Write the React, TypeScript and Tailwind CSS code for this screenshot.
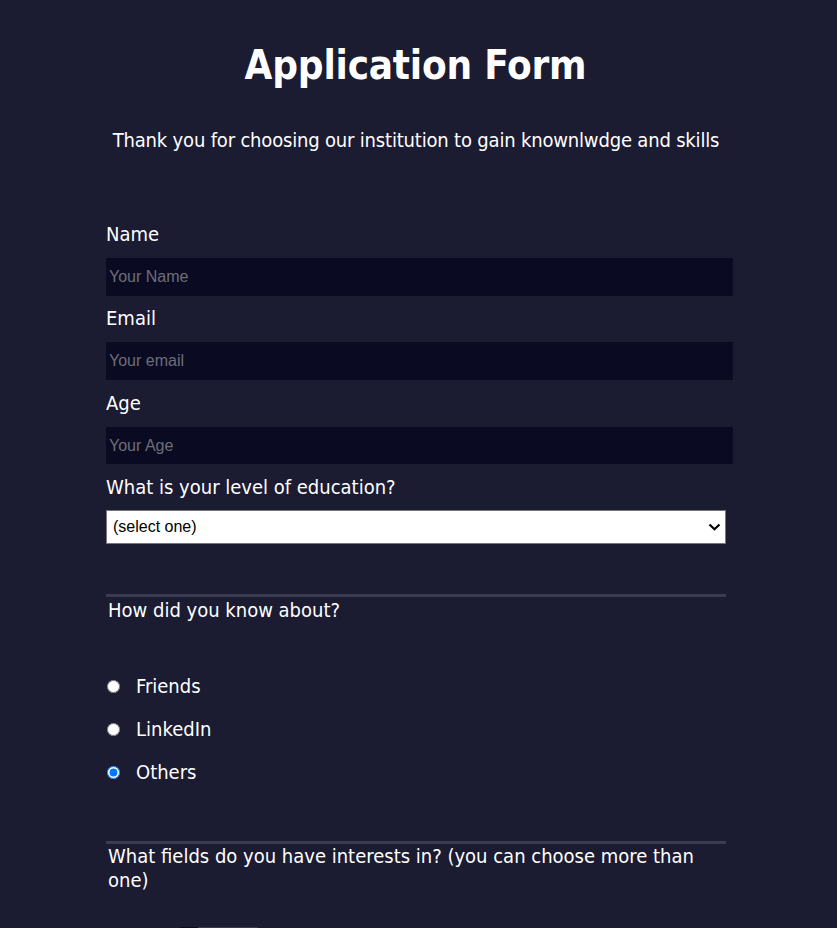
import React from "react";

const font = "font-['DejaVu_Sans_Condensed','DejaVu_Sans',sans-serif]";

const Field = ({
  label,
  placeholder,
  type = "text",
}: {
  label: string;
  placeholder: string;
  type?: string;
}) => (
  <div className="flex flex-col">
    <label className="text-[20px] leading-[24px] mb-[12px]">{label}</label>
    <input
      type={type}
      placeholder={placeholder}
      className="w-[627px] h-[37.7px] bg-[#0a0a23] px-[3px] text-[16px] text-white font-['Liberation_Sans',sans-serif] placeholder:text-[#6e6e78] outline-none mb-[10.7px]"
    />
  </div>
);

const App = () => {
  return (
    <div className={`min-h-[928px] bg-[#1b1b32] text-white ${font}`}>
      <div className="w-[627px] mx-auto pt-[41px] pl-[1px]">
        <h1 className="text-[40px] leading-[48px] font-bold text-center tracking-[-0.2px] pr-[7px]">
          Application Form
        </h1>
        <p className="text-[20px] leading-[24px] text-center mt-[39px] tracking-[-0.18px] pr-[6px]">
          Thank you for choosing our institution to gain knownlwdge and skills
        </p>

        <form className="mt-[70px]">
          <Field label="Name" placeholder="Your Name" />
          <Field label="Email" placeholder="Your email" type="email" />
          <Field label="Age" placeholder="Your Age" type="number" />

          <label className="block text-[20px] leading-[24px] mb-[11px]">
            What is your level of education?
          </label>
          <div className="relative w-[620px]">
            <select
              defaultValue=""
              className="appearance-none w-[620px] h-[34px] bg-white text-black border border-[#767676] px-[6px] text-[16px] font-['Liberation_Sans',sans-serif] outline-none"
            >
              <option value="">(select one)</option>
              <option>High School</option>
              <option>Bachelor</option>
              <option>Master</option>
            </select>
            <svg
              className="absolute right-[5px] top-[13px] pointer-events-none"
              width="13"
              height="8"
              viewBox="0 0 13 8"
              fill="none"
            >
              <path d="M1.5 1.5 L6.5 6.2 L11.5 1.5" stroke="#000" strokeWidth="2.2" />
            </svg>
          </div>

          {/* How did you know */}
          <div className="w-[620px] mt-[50px] border-t-[3px] border-[#3b3b4f]">
            <p className="text-[20px] leading-[24px] pl-[2px] pt-[1px]">
              How did you know about?
            </p>
            <div className="mt-[52px] flex flex-col gap-[19px] text-[20px] leading-[24px]">
              {["Friends", "LinkedIn", "Others"].map((opt) => (
                <label key={opt} className="flex items-center">
                  <input
                    type="radio"
                    name="source"
                    defaultChecked={opt === "Others"}
                    className="w-[13px] h-[13px] ml-[1px] mr-[16px] m-0"
                  />
                  {opt}
                </label>
              ))}
            </div>
          </div>

          {/* Interests */}
          <div className="w-[620px] mt-[57px] border-t-[3px] border-[#3b3b4f]">
            <p className="text-[20px] leading-[24px] pl-[2px] pr-[30px]">
              What fields do you have interests in? (you can choose more than
              one)
            </p>
            <div className="mt-[35px] flex ml-[74px]">
              <div className="w-[18px] h-[4px] bg-[#0a0a23]" />
              <div className="w-[60px] h-[4px] bg-[#3b3b4f]" />
            </div>
          </div>
        </form>
      </div>
    </div>
  );
};

export default App;
